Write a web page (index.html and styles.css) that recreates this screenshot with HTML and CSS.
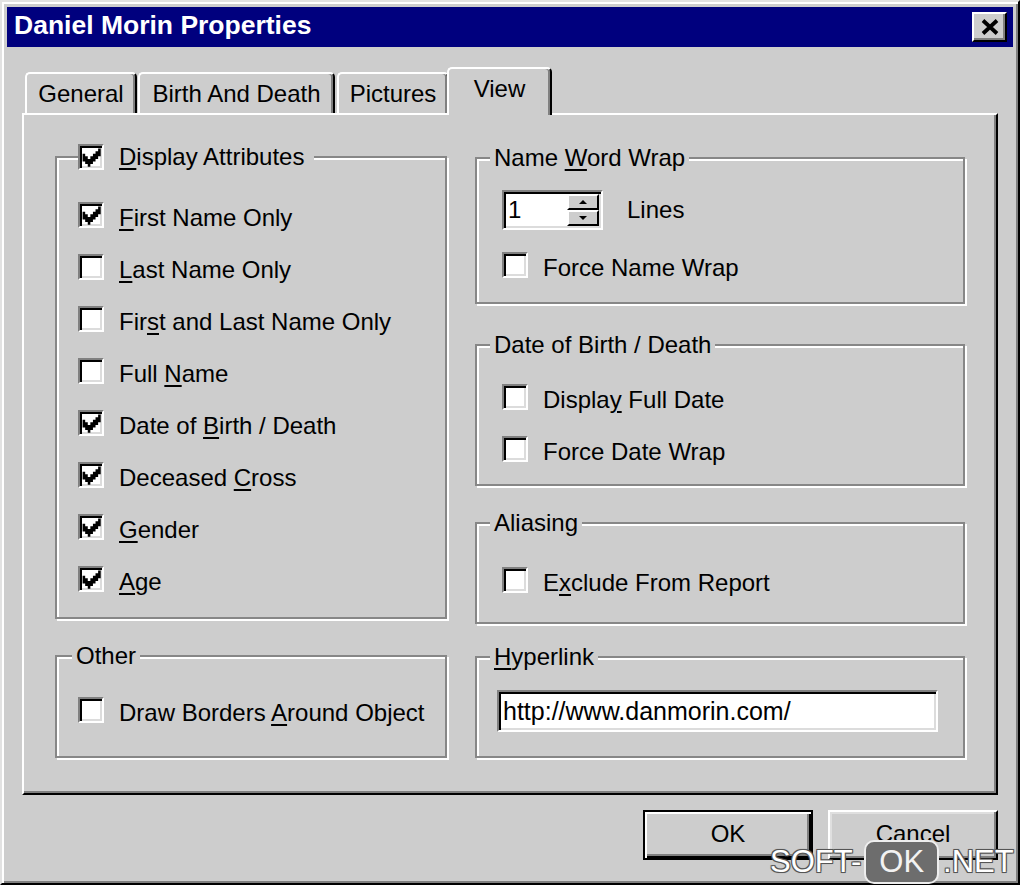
FILE: index.html
```html
<!DOCTYPE html>
<html lang="en">
<head>
<meta charset="utf-8">
<title>Daniel Morin Properties</title>
<link rel="stylesheet" href="styles.css">
</head>
<body>
<div class="window">
  <div class="titlebar">
    <span class="title">Daniel Morin Properties</span>
    <span class="close"><svg width="18" height="16" viewBox="0 0 18 16"><path d="M2 1.5 L16 14.5 M16 1.5 L2 14.5" stroke="#000" stroke-width="3.8" fill="none"/></svg></span>
  </div>
  <div class="client">
    <div class="tabs">
      <div class="tab t-general">General</div>
      <div class="tab t-birth">Birth And Death</div>
      <div class="tab t-pictures">Pictures</div>
      <div class="tab t-view active">View</div>
    </div>
    <div class="panel">
      <div class="col col-left">
        <fieldset class="group g-attrs">
          <legend class="lg-check"><span class="lg-inner"><span class="cb"><svg class="tick" width="22" height="22" viewBox="0 0 8.5 8.5"><path d="M1 3h1v1h1v1h1v-1h1v-1h1v-1h1v-1h1v3h-1v1h-1v1h-1v1h-1v1h-1v-1h-1v-1h-1z"/></svg></span><span><u>D</u>isplay Attributes</span></span></legend>
          <div class="rows rows-left">
            <div class="row"><span class="cb"><svg class="tick" width="22" height="22" viewBox="0 0 8.5 8.5"><path d="M1 3h1v1h1v1h1v-1h1v-1h1v-1h1v-1h1v3h-1v1h-1v1h-1v1h-1v1h-1v-1h-1v-1h-1z"/></svg></span><span class="lbl"><u>F</u>irst Name Only</span></div>
            <div class="row"><span class="cb"></span><span class="lbl"><u>L</u>ast Name Only</span></div>
            <div class="row"><span class="cb"></span><span class="lbl">Fir<u>s</u>t and Last Name Only</span></div>
            <div class="row"><span class="cb"></span><span class="lbl">Full <u>N</u>ame</span></div>
            <div class="row"><span class="cb"><svg class="tick" width="22" height="22" viewBox="0 0 8.5 8.5"><path d="M1 3h1v1h1v1h1v-1h1v-1h1v-1h1v-1h1v3h-1v1h-1v1h-1v1h-1v1h-1v-1h-1v-1h-1z"/></svg></span><span class="lbl">Date of <u>B</u>irth / Death</span></div>
            <div class="row"><span class="cb"><svg class="tick" width="22" height="22" viewBox="0 0 8.5 8.5"><path d="M1 3h1v1h1v1h1v-1h1v-1h1v-1h1v-1h1v3h-1v1h-1v1h-1v1h-1v1h-1v-1h-1v-1h-1z"/></svg></span><span class="lbl">Deceased <u>C</u>ross</span></div>
            <div class="row"><span class="cb"><svg class="tick" width="22" height="22" viewBox="0 0 8.5 8.5"><path d="M1 3h1v1h1v1h1v-1h1v-1h1v-1h1v-1h1v3h-1v1h-1v1h-1v1h-1v1h-1v-1h-1v-1h-1z"/></svg></span><span class="lbl"><u>G</u>ender</span></div>
            <div class="row"><span class="cb"><svg class="tick" width="22" height="22" viewBox="0 0 8.5 8.5"><path d="M1 3h1v1h1v1h1v-1h1v-1h1v-1h1v-1h1v3h-1v1h-1v1h-1v1h-1v1h-1v-1h-1v-1h-1z"/></svg></span><span class="lbl"><u>A</u>ge</span></div>
          </div>
        </fieldset>
        <fieldset class="group g-other">
          <legend class="lg-left">Other</legend>
          <div class="rows rows-left">
            <div class="row"><span class="cb"></span><span class="lbl">Draw Borders <u>A</u>round Object</span></div>
          </div>
        </fieldset>
      </div>
      <div class="col col-right">
        <fieldset class="group g-nww">
          <legend class="lg-right">Name <u>W</u>ord Wrap</legend>
          <div class="rows rows-right">
            <div class="spin-row">
              <div class="spin">
                <span class="spin-val">1</span>
                <span class="spin-btns">
                  <span class="sb"><span class="tri-up"></span></span>
                  <span class="sb"><span class="tri-down"></span></span>
                </span>
              </div>
              <span class="lines">Lines</span>
            </div>
            <div class="row row-fnw"><span class="cb"></span><span class="lbl">Force Name Wrap</span></div>
          </div>
        </fieldset>
        <fieldset class="group g-dob">
          <legend class="lg-right">Date of Birth / Death</legend>
          <div class="rows rows-right">
            <div class="row"><span class="cb"></span><span class="lbl">Displa<u>y</u> Full Date</span></div>
            <div class="row"><span class="cb"></span><span class="lbl">Force Date Wrap</span></div>
          </div>
        </fieldset>
        <fieldset class="group g-alias">
          <legend class="lg-right">Aliasing</legend>
          <div class="rows rows-right">
            <div class="row"><span class="cb"></span><span class="lbl">E<u>x</u>clude From Report</span></div>
          </div>
        </fieldset>
        <fieldset class="group g-hyper">
          <legend class="lg-right"><u>H</u>yperlink</legend>
          <div class="rows rows-hyper">
            <div class="input">http://www.danmorin.com/</div>
          </div>
        </fieldset>
      </div>
    </div>
    <div class="buttons">
      <div class="btn btn-default">OK</div>
      <div class="btn">Cancel</div>
    </div>
  </div>
  <div class="watermark"><span class="wm-text">SOFT-</span><span class="wm-box">OK</span><span class="wm-text">.NET</span></div>
</div>
</body>
</html>
```
FILE: styles.css
```css
* { box-sizing: border-box; }
html, body { margin: 0; padding: 0; }
body {
  width: 1020px;
  height: 885px;
  overflow: hidden;
  background: #cdcdcd;
  font-family: "Liberation Sans", Arial, sans-serif;
  font-size: 24px;
  color: #000;
}
u { text-decoration-thickness: 2px; text-underline-offset: 3px; }

.window {
  position: relative;
  width: 1020px;
  height: 885px;
  background: #cdcdcd;
  border: 2px solid;
  border-color: #e2e2e2 #000 #000 #e2e2e2;
  box-shadow: inset 2px 2px 0 #fff, inset -2px -2px 0 #808080;
  padding: 5px;
}

/* title bar */
.titlebar {
  height: 40px;
  background: #00007e;
  display: flex;
  align-items: center;
  justify-content: space-between;
  padding: 0 6px 0 7px;
}
.title {
  color: #fff;
  font-weight: bold;
  font-size: 26.5px;
  line-height: 30px;
  margin-top: -4px;
}
.close {
  width: 35px;
  height: 30px;
  background: #cdcdcd;
  border: 2px solid;
  border-color: #fff #000 #000 #fff;
  box-shadow: inset -2px -2px 0 #808080;
  display: flex;
  align-items: center;
  justify-content: center;
}

/* client */
.client { padding: 20px 15px 0; }

.tabs {
  display: flex;
  align-items: flex-end;
  height: 46px;
  padding-left: 3px;
}
.tab {
  height: 41px;
  background: #cdcdcd;
  border-top: 2px solid #fff;
  border-left: 2px solid #fff;
  border-right: 2px solid #000;
  border-radius: 5px 5px 0 0;
  box-shadow: inset -2px 0 0 #808080;
  display: flex;
  align-items: center;
  justify-content: center;
  line-height: 28px;
}
.t-general { width: 112px; }
.t-birth { width: 197px; margin-left: 1px; }
.t-pictures { width: 112px; margin-left: 2px; }
.tab.active {
  position: relative;
  z-index: 1;
  width: 105px;
  height: 48px;
  margin-left: -2px;
  margin-bottom: -2px;
  padding-bottom: 6px;
}

.panel {
  height: 682px;
  display: flex;
  gap: 28px;
  padding: 28px 0 0 31px;
  border: 2px solid;
  border-color: #fff #000 #000 #fff;
  box-shadow: inset -2px -2px 0 #808080;
}
.col-left { width: 392px; }
.col-right { width: 490px; }

/* group boxes */
.group {
  margin: 0;
  padding: 0;
  min-width: 0;
  border: 2px solid #878787;
  box-shadow: inset 2px 2px 0 #fff, 2px 2px 0 #fff;
}
.group legend {
  line-height: 28px;
  background: #cdcdcd;
}
.lg-check { margin-left: 21px; padding: 0 10px 0 0; }
.lg-inner { display: flex; align-items: center; gap: 15px; height: 28px; }
.lg-left { margin-left: 15px; padding: 0 4px; }
.lg-right { margin-left: 13px; padding: 0 4px; }

.g-attrs { height: 476px; }
.g-other { height: 116px; margin-top: 23px; }
.g-nww { height: 160px; margin-top: 1px; }
.g-dob { height: 155px; margin-top: 27px; }
.g-alias { height: 115px; margin-top: 23px; }
.g-hyper { height: 115px; margin-top: 19px; }

.rows-left { padding-left: 21px; }
.rows-right { padding-left: 25px; }
.g-attrs .rows { padding-top: 18px; }
.g-other .rows { padding-top: 14px; }
.g-nww .rows { padding-top: 18px; }
.g-dob .rows { padding-top: 12px; }
.g-alias .rows { padding-top: 17px; }
.rows-hyper { padding: 19px 0 0 20px; }

.row {
  display: flex;
  align-items: center;
  gap: 15px;
  height: 52px;
}
.row-fnw { margin-top: 9px; }
.lbl { line-height: 28px; padding-top: 5px; }

/* checkbox */
.cb {
  flex: none;
  width: 26px;
  height: 26px;
  background: #fff;
  border: 2px solid;
  border-color: #808080 #fff #fff #808080;
  box-shadow: inset 2px 2px 0 #000, inset -2px -2px 0 #dcdcdc;
}
.tick { display: block; fill: #000; }

/* spinner */
.spin-row { display: flex; align-items: center; gap: 24px; height: 40px; }
.spin {
  width: 101px;
  height: 40px;
  display: flex;
  padding: 2px;
  background: #fff;
  border: 2px solid;
  border-color: #808080 #fff #fff #808080;
  box-shadow: inset 2px 2px 0 #000, inset -2px -2px 0 #dcdcdc;
}
.spin-val { flex: 1; padding-left: 2px; line-height: 32px; }
.spin-btns { width: 32px; display: flex; flex-direction: column; }
.sb {
  flex: 1;
  background: #cdcdcd;
  border: 2px solid;
  border-color: #fff #000 #000 #fff;
  display: flex;
  align-items: center;
  justify-content: center;
}
.tri-up {
  width: 0; height: 0;
  border-left: 4px solid transparent;
  border-right: 4px solid transparent;
  border-bottom: 4px solid #000;
}
.tri-down {
  width: 0; height: 0;
  border-left: 4px solid transparent;
  border-right: 4px solid transparent;
  border-top: 4px solid #000;
}
.lines { line-height: 28px; }

/* text input */
.input {
  width: 441px;
  height: 42px;
  background: #fff;
  border: 2px solid;
  border-color: #808080 #fff #fff #808080;
  box-shadow: inset 2px 2px 0 #000, inset -2px -2px 0 #dcdcdc;
  padding: 2px 4px;
  font-size: 25px;
  line-height: 34px;
}

/* buttons */
.buttons {
  display: flex;
  justify-content: flex-end;
  gap: 15px;
  margin-top: 15px;
}
.btn {
  width: 170px;
  height: 50px;
  display: flex;
  align-items: center;
  justify-content: center;
  border: 2px solid;
  border-color: #fff #000 #000 #fff;
  box-shadow: inset -2px -2px 0 #808080, inset 2px 2px 0 #dfdfdf;
  padding-bottom: 2px;
}
.btn-default {
  border: 2px solid #000;
  box-shadow: inset 2px 2px 0 #fff, inset -2px -2px 0 #000, inset -4px -4px 0 #808080;
}

/* watermark overlay */
.watermark {
  position: absolute;
  left: 768px;
  top: 838px;
  display: flex;
  align-items: center;
  font-size: 31px;
  color: #fff;
}
.wm-text {
  text-shadow: 1px 1px 0 #555, -1px -1px 0 #555, 1px -1px 0 #555, -1px 1px 0 #555, 0 0 2px #444;
}
.wm-box {
  height: 44px;
  margin: 0 4px 0 3px;
  padding: 0 13px;
  display: flex;
  align-items: center;
  background: #6d6d6d;
  border: 2px solid #eee;
  border-radius: 10px;
  color: #f2f2f2;
}
```
